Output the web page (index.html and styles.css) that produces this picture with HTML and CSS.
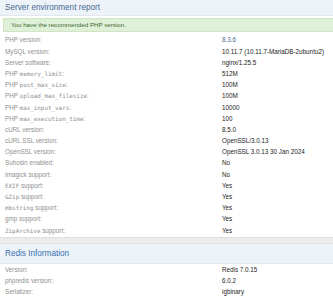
FILE: index.html
```html
<!DOCTYPE html>
<html lang="en">
<head>
  <meta charset="UTF-8" />
  <title>Server environment report</title>
  <link rel="stylesheet" href="styles.css">
</head>
<body>

  <section class="block">
    <h2 class="block-header">Server environment report</h2>
    <div class="alert">You have the recommended PHP version.</div>
    <dl class="pairs">
      <dt>PHP version:</dt><dd class="link">8.3.6</dd>
      <dt>MySQL version:</dt><dd>10.11.7 (10.11.7-MariaDB-2ubuntu2)</dd>
      <dt>Server software:</dt><dd>nginx/1.25.5</dd>
      <dt>PHP <code>memory_limit</code>:</dt><dd>512M</dd>
      <dt>PHP <code>post_max_size</code>:</dt><dd>100M</dd>
      <dt>PHP <code>upload_max_filesize</code>:</dt><dd>100M</dd>
      <dt>PHP <code>max_input_vars</code>:</dt><dd>10000</dd>
      <dt>PHP <code>max_execution_time</code>:</dt><dd>100</dd>
      <dt>cURL version:</dt><dd>8.5.0</dd>
      <dt>cURL SSL version:</dt><dd>OpenSSL/3.0.13</dd>
      <dt>OpenSSL version:</dt><dd>OpenSSL 3.0.13 30 Jan 2024</dd>
      <dt>Suhosin enabled:</dt><dd>No</dd>
      <dt>Imagick support:</dt><dd>No</dd>
      <dt><code>EXIF</code> support:</dt><dd>Yes</dd>
      <dt><code>GZip</code> support:</dt><dd>Yes</dd>
      <dt><code>mbstring</code> support:</dt><dd>Yes</dd>
      <dt>gmp support:</dt><dd>Yes</dd>
      <dt><code>ZipArchive</code> support:</dt><dd>Yes</dd>
    </dl>
  </section>

  <div class="block-gap"></div>

  <section class="block">
    <h2 class="block-header tall">Redis Information</h2>
    <dl class="pairs">
      <dt>Version:</dt><dd>Redis 7.0.15</dd>
      <dt>phpredis version:</dt><dd>6.0.2</dd>
      <dt>Serializer:</dt><dd>igbinary</dd>
    </dl>
  </section>

</body>
</html>
```

FILE: styles.css
```css
:root {
  --header-bg: #eef3fa;
  --header-text: #46698f;
  --label: #909090;
  --value: #1c1c1c;
  --border: #dcdfe3;
}

body {
  margin: 0;
  font-family: 'Liberation Sans', Arial, sans-serif;
  background: #fff;
  color: var(--value);
}

.block-header {
  margin: 0;
  padding: 0 5px;
  height: 15px;
  line-height: 15px;
  font-size: 8.2px;
  font-weight: normal;
  color: var(--header-text);
  background: var(--header-bg);
  border-bottom: 1px solid #e3e8ef;
}

.block-header.tall {
  height: 19px;
  line-height: 20px;
  color: #3670ad;
}

.alert {
  margin: 2px 0 0 3px;
  height: 12px;
  line-height: 12px;
  padding: 0 7px;
  font-size: 6.2px;
  color: #3d6b2f;
  background: #dff0d8;
  border: 1px solid #cfe5c4;
  border-right: none;
}

.pairs {
  display: grid;
  grid-template-columns: 222px 1fr;
  grid-auto-rows: 11.2px;
  margin: 2.4px 0 0;
  font-size: 6.3px;
  line-height: 11.2px;
}

.pairs dt {
  padding-left: 5px;
  color: var(--label);
  white-space: nowrap;
}

.pairs dd {
  margin: 0;
  color: var(--value);
  white-space: nowrap;
}

.pairs dd.link {
  color: #4a6d98;
}

.pairs code {
  font-family: 'DejaVu Sans Mono', 'Liberation Mono', monospace;
  font-size: 5.9px;
  line-height: 1;
}

.block-gap {
  height: 5px;
  margin-top: 1px;
  background: #ececec;
  border-top: 1px solid var(--border);
  border-bottom: 1px solid var(--border);
}

.block-gap + .block .pairs {
  margin-top: 0;
}
```
